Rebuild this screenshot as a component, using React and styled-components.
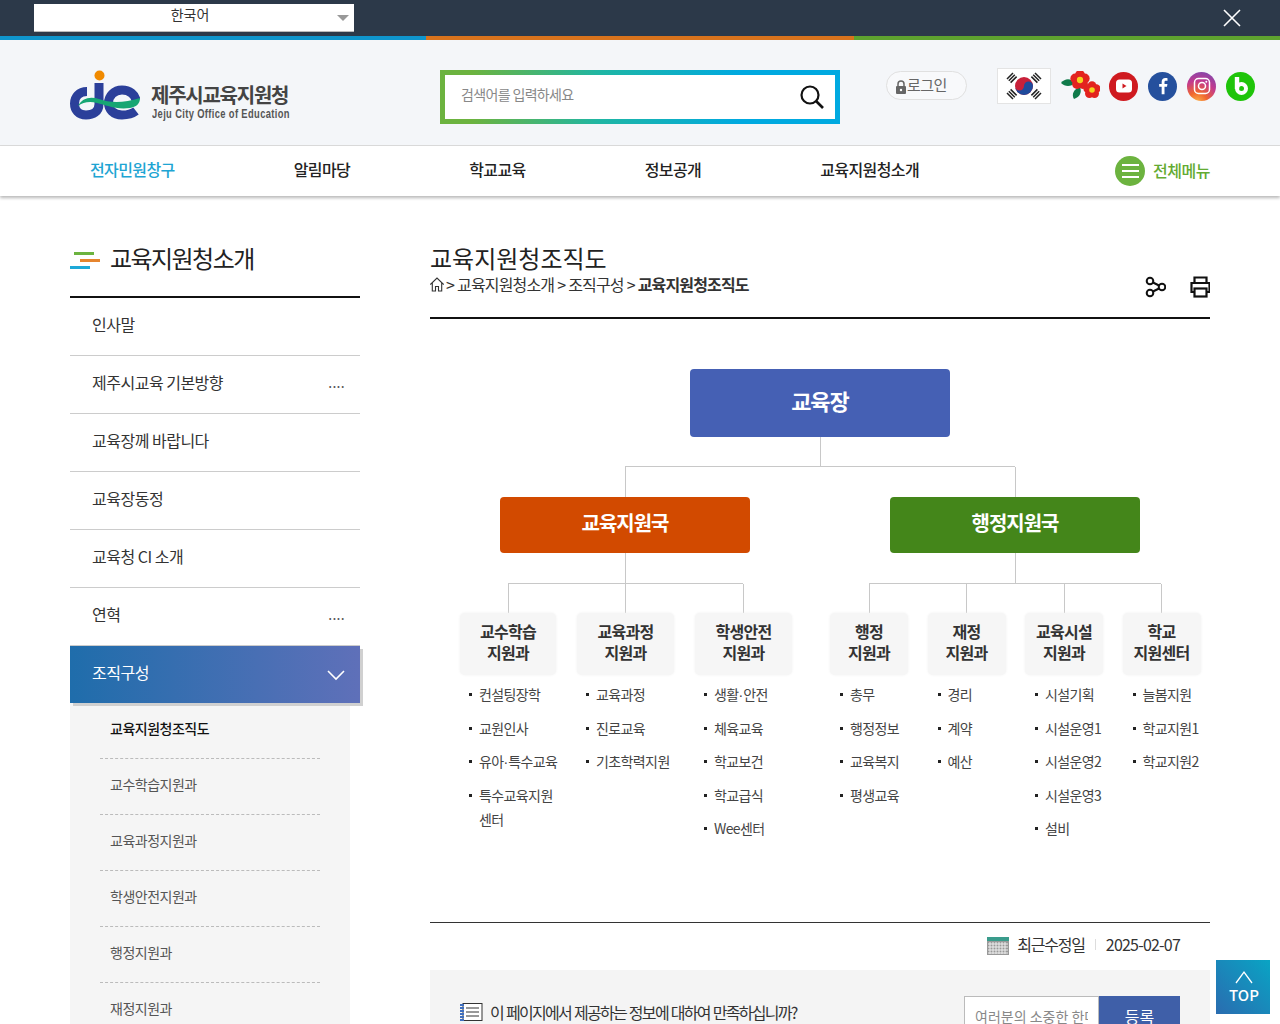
import React from 'react';
import styled, { createGlobalStyle } from 'styled-components';

const GlobalStyle = createGlobalStyle`
	html, body {
		margin: 0;
		padding: 0;
		overflow: hidden;
	}
	body {
		font-family: 'Noto Sans CJK KR', 'Noto Sans', sans-serif;
		color: #222;
		background: #fff;
	}
	ul {
		margin: 0;
		padding: 0;
		list-style: none;
	}
`;

const Page = styled.div`
	height: 1024px;
	overflow: hidden;
`;

const TopBar = styled.div`
	height: 36px;
	box-sizing: border-box;
	background: #2c3949;
	display: flex;
	align-items: flex-start;
	justify-content: space-between;
	padding: 4px 38px 0 34px;
`;

const LangSelect = styled.div`
	width: 320px;
	height: 28px;
	background: #fff;
	color: #333;
	font-size: 14px;
	line-height: 20px;
	text-align: center;
	position: relative;
	border-bottom: 1px solid #bbb;
	box-sizing: border-box;
	padding-right: 8px;
	&::after {
		content: '';
		position: absolute;
		right: 5px;
		top: 11px;
		border: 5px solid transparent;
		border-top: 6px solid #999;
		border-left-width: 6px;
		border-right-width: 6px;
	}
`;

const CloseBtn = styled.div`
	width: 20px;
	height: 20px;
	margin-top: 4px;
	svg {
		display: block;
	}
`;

const Stripe = styled.div`
	height: 4px;
	background: linear-gradient(
		to right,
		#0f95cc 0,
		#0f95cc 426px,
		#d9731c 426px,
		#d9731c 854px,
		#5ea32f 854px
	);
`;

const Header = styled.header`
	height: 106px;
	box-sizing: border-box;
	background: #f4f6f9;
	display: flex;
	align-items: flex-start;
	padding: 0 0 0 70px;
	border-bottom: 1px solid #dcdcdc;
`;

const Logo = styled.div`
	width: 370px;
	padding-top: 30px;
	display: flex;
	align-items: flex-start;
	flex-shrink: 0;
`;

const LogoText = styled.div`
	margin: 11px 0 0 11px;
	strong {
		display: block;
		font-size: 20px;
		line-height: 28px;
		font-weight: 700;
		color: #444;
		letter-spacing: -1.25px;
	}
	span {
		display: block;
		margin: -2px 0 0 1px;
		font-family: 'Liberation Sans', sans-serif;
		font-size: 13px;
		line-height: 14px;
		font-weight: 700;
		color: #555;
		letter-spacing: 0.5px;
		white-space: nowrap;
		transform: scaleX(0.72);
		transform-origin: left center;
	}
`;

const SearchBox = styled.div`
	width: 400px;
	height: 54px;
	margin-top: 30px;
	box-sizing: border-box;
	padding: 5px;
	flex-shrink: 0;
	background: linear-gradient(to right, #6cb33f 0, #6cb33f 8%, #1fb6a4 40%, #00a9e0 75%, #00a9e0 100%);
`;

const SearchInner = styled.div`
	height: 100%;
	box-sizing: border-box;
	background: #fff;
	display: flex;
	align-items: center;
	justify-content: space-between;
	padding: 0 10px 7px 16px;
	font-size: 14px;
	color: #888;
	letter-spacing: -0.65px;
	svg {
		display: block;
		margin-top: 7px;
	}
`;

const LoginPill = styled.div`
	width: 81px;
	height: 29px;
	margin: 31px 0 0 46px;
	box-sizing: border-box;
	border: 1px solid #e0e0e0;
	border-radius: 15px;
	background: #f8f9fb;
	display: flex;
	align-items: center;
	padding: 0 0 2px 8px;
	font-size: 15px;
	color: #666;
	letter-spacing: -0.5px;
	flex-shrink: 0;
	svg {
		display: block;
		margin-top: 4px;
	}
`;

const SnsRow = styled.div`
	display: flex;
	align-items: center;
	margin: 28px 0 0 30px;
	height: 36px;
	svg {
		display: block;
		flex-shrink: 0;
	}
`;

const FlagBox = styled.div`
	width: 54px;
	height: 36px;
	box-sizing: border-box;
	border: 1px solid #e4e4e4;
	background: #fff;
	margin-right: 10px;
`;

const SnsCircle = styled.div`
	width: 29px;
	height: 29px;
	border-radius: 50%;
	background: ${(p) => p.$bg};
	margin-left: ${(p) => p.$gap || 10}px;
	display: flex;
	align-items: center;
	justify-content: center;
	color: #fff;
`;

const Nav = styled.nav`
	height: 50px;
	box-sizing: border-box;
	background: #fff;
	display: flex;
	align-items: center;
	padding: 0 70px 0 90px;
	box-shadow: 0 2px 3px rgba(0, 0, 0, 0.28);
	position: relative;
`;

const NavLinks = styled.ul`
	display: flex;
	gap: 119px;
	flex: 1;
	margin-bottom: 4px;
`;

const NavLink = styled.li`
	font-size: 16px;
	font-weight: 500;
	letter-spacing: -0.6px;
	color: ${(p) => (p.$active ? '#1ea5d3' : '#222')};
`;

const AllMenu = styled.div`
	display: flex;
	align-items: center;
	gap: 8px;
	font-size: 16px;
	font-weight: 500;
	letter-spacing: -0.5px;
	color: #63ab32;
	span {
		margin-bottom: 3px;
	}
`;

const Burger = styled.div`
	width: 30px;
	height: 30px;
	border-radius: 50%;
	background: #6cb33f;
	display: flex;
	flex-direction: column;
	align-items: center;
	justify-content: center;
	gap: 4px;
	i {
		display: block;
		width: 17px;
		height: 2px;
		background: #fff;
	}
`;

const Main = styled.div`
	display: flex;
	padding: 46px 70px 0;
	gap: 70px;
`;

const Side = styled.aside`
	width: 290px;
	flex-shrink: 0;
`;

const SideTitle = styled.h2`
	margin: 0;
	height: 54px;
	border-bottom: 2px solid #111;
	display: flex;
	align-items: flex-start;
	gap: 10px;
	font-size: 24px;
	font-weight: 400;
	line-height: 32px;
	letter-spacing: -1.55px;
	color: #222;
	svg {
		display: block;
		margin-top: 10px;
	}
`;

const SideItem = styled.li`
	height: 58px;
	box-sizing: border-box;
	border-bottom: 1px solid #ccc;
	padding: 0 15px 6px 22px;
	display: flex;
	align-items: center;
	justify-content: space-between;
	font-size: 16px;
	letter-spacing: -0.5px;
	color: #333;
	small {
		font-size: 14px;
		letter-spacing: 0.3px;
		color: #555;
	}
`;

const SideActive = styled.li`
	height: 57px;
	box-sizing: border-box;
	padding: 0 15px 6px 22px;
	display: flex;
	align-items: center;
	justify-content: space-between;
	font-size: 16px;
	letter-spacing: -0.5px;
	color: #fff;
	background: linear-gradient(to right, #1f6dab, #5f70b9);
	box-shadow: 3px 3px 0 #d0d0d0;
	position: relative;
	svg {
		display: block;
		margin-top: 8px;
	}
`;

const SubMenu = styled.ul`
	width: 280px;
	background: #f5f5f5;
`;

const SubItem = styled.li`
	height: 56px;
	margin: 0 30px;
	box-sizing: border-box;
	border-bottom: 1px dashed #bbb;
	padding: 0 0 6px 10px;
	display: flex;
	align-items: center;
	font-size: 14px;
	letter-spacing: -0.5px;
	font-weight: ${(p) => (p.$current ? 500 : 400)};
	color: ${(p) => (p.$current ? '#111' : '#555')};
`;

const Content = styled.main`
	width: 780px;
	flex-shrink: 0;
`;

const ContentHead = styled.div`
	height: 75px;
	border-bottom: 2px solid #111;
	display: flex;
	justify-content: space-between;
`;

const PageTitle = styled.h1`
	margin: 0;
	font-size: 24px;
	font-weight: 400;
	line-height: 32px;
	color: #222;
`;

const Crumbs = styled.div`
	display: flex;
	align-items: center;
	gap: 3px;
	height: 20px;
	font-size: 16px;
	letter-spacing: -0.85px;
	color: #333;
	b {
		font-weight: 700;
	}
	svg {
		display: block;
		margin-right: -1px;
	}
`;

const Tools = styled.div`
	display: flex;
	gap: 23px;
	padding-top: 34px;
	svg {
		display: block;
	}
`;

const Chart = styled.div`
	display: flex;
	flex-direction: column;
	align-items: center;
	padding-top: 50px;
	height: 603px;
	box-sizing: border-box;
`;

const HeadBox = styled.div`
	width: ${(p) => p.$w}px;
	height: ${(p) => p.$h}px;
	flex-shrink: 0;
	background: ${(p) => p.$bg};
	border-radius: 4px;
	color: #fff;
	font-size: ${(p) => p.$size}px;
	font-weight: 700;
	letter-spacing: -1px;
	display: flex;
	align-items: center;
	justify-content: center;
	padding-bottom: 6px;
	box-sizing: border-box;
`;

const Stem = styled.div`
	width: 1px;
	height: ${(p) => p.$h}px;
	background: #c8c8c8;
	flex-shrink: 0;
`;

const Rail = styled.div`
	align-self: flex-start;
	margin-left: 195px;
	width: 390px;
	height: 1px;
	background: #c8c8c8;
`;

const Branches = styled.div`
	align-self: flex-start;
	margin-left: 30px;
	display: flex;
	gap: 40px;
`;

const Branch = styled.div`
	width: ${(p) => p.$w}px;
	display: flex;
	flex-direction: column;
	align-items: center;
`;

const SubRail = styled.div`
	align-self: flex-start;
	margin-left: ${(p) => p.$left}px;
	width: ${(p) => p.$w}px;
	height: 1px;
	background: #c8c8c8;
`;

const Columns = styled.div`
	align-self: stretch;
	display: flex;
	gap: ${(p) => p.$gap}px;
`;

const Column = styled.div`
	width: ${(p) => p.$w}px;
	flex-shrink: 0;
	display: flex;
	flex-direction: column;
	align-items: center;
`;

const DeptName = styled.div`
	width: 100%;
	height: 62px;
	background: #f6f6f6;
	border-radius: 5px;
	box-shadow: 0 0 3px #f0f0f0;
	text-align: center;
	font-size: 16px;
	font-weight: 700;
	line-height: 21px;
	letter-spacing: -0.7px;
	color: #333;
	padding-top: 8px;
	box-sizing: border-box;
`;

const Tasks = styled.ul`
	align-self: stretch;
	margin: 7px -4px 0 ${(p) => p.$indent || 0}px;
`;

const Task = styled.li`
	position: relative;
	padding-left: 19px;
	margin-bottom: 9.5px;
	font-size: 14px;
	line-height: 24px;
	letter-spacing: -0.6px;
	color: #444;
	&::before {
		content: '';
		position: absolute;
		left: 9px;
		top: 11px;
		width: 3px;
		height: 3px;
		background: #222;
	}
`;

const MidDot = styled.span`
	font-family: 'Liberation Sans', sans-serif;
	letter-spacing: 0;
	line-height: 0;
`;

const Modified = styled.div`
	border-top: 1px solid #333;
	height: 42px;
	display: flex;
	align-items: center;
	justify-content: flex-end;
	padding: 0 30px 5px 0;
	font-size: 16px;
	letter-spacing: -0.8px;
	color: #333;
	svg {
		display: block;
		margin: 4px 8px 0 0;
	}
	span {
		letter-spacing: -1.2px;
	}
	i {
		width: 1px;
		height: 11px;
		background: #ddd;
		margin: 0 10px;
	}
`;

const Survey = styled.div`
	background: #f4f4f4;
	height: 110px;
	display: flex;
	align-items: flex-start;
	justify-content: space-between;
	padding: 26px 30px 0;
`;

const SurveyText = styled.div`
	display: flex;
	align-items: center;
	gap: 7px;
	margin-top: 4px;
	font-size: 16px;
	letter-spacing: -1.7px;
	word-spacing: 1px;
	color: #333;
	svg {
		display: block;
	}
`;

const SurveyForm = styled.div`
	display: flex;
	height: 48px;
`;

const SurveyInput = styled.input`
	width: 135px;
	box-sizing: border-box;
	border: 1px solid #bbb;
	border-radius: 0;
	background: #fff;
	padding: 0 10px 8px;
	font-family: inherit;
	font-size: 14px;
	outline: none;
	&::placeholder {
		color: #888;
		opacity: 1;
	}
`;

const SurveyBtn = styled.div`
	width: 81px;
	background: #3f5fa8;
	color: #fff;
	font-size: 16px;
	text-align: center;
	padding-top: 8px;
	box-sizing: border-box;
`;

const TopBtn = styled.div`
	position: fixed;
	left: 1216px;
	top: 960px;
	width: 54px;
	height: 54px;
	background: linear-gradient(45deg, #2a6cb0, #09a4c4);
	color: #fff;
	display: flex;
	flex-direction: column;
	align-items: center;
	font-size: 15px;
	font-weight: 500;
	line-height: 18px;
	padding: 10px 0 0 2px;
	box-sizing: border-box;
	svg {
		display: block;
		margin-bottom: 2px;
	}
`;

const sideItems = [
	{ name: '인사말' },
	{ name: '제주시교육 기본방향', more: true },
	{ name: '교육장께 바랍니다' },
	{ name: '교육장동정' },
	{ name: '교육청 CI 소개' },
	{ name: '연혁', more: true },
];

const subItems = [
	'교육지원청조직도',
	'교수학습지원과',
	'교육과정지원과',
	'학생안전지원과',
	'행정지원과',
	'재정지원과',
];

const leftDepts = [
	{
		name: ['교수학습', '지원과'],
		w: 96,
		tasks: ['컨설팅장학', '교원인사', <>유아<MidDot>·</MidDot>특수교육</>, '특수교육지원 센터'],
	},
	{ name: ['교육과정', '지원과'], w: 97, tasks: ['교육과정', '진로교육', '기초학력지원'] },
	{
		name: ['학생안전', '지원과'],
		w: 97,
		tasks: [<>생활<MidDot>·</MidDot>안전</>, '체육교육', '학교보건', '학교급식', 'Wee센터'],
	},
];

const rightDepts = [
	{ name: ['행정', '지원과'], w: 78, tasks: ['총무', '행정정보', '교육복지', '평생교육'] },
	{ name: ['재정', '지원과'], w: 78, tasks: ['경리', '계약', '예산'] },
	{ name: ['교육시설', '지원과'], w: 78, tasks: ['시설기획', '시설운영1', '시설운영2', '시설운영3', '설비'] },
	{ name: ['학교', '지원센터'], w: 78, tasks: ['늘봄지원', '학교지원1', '학교지원2'] },
];

const JeLogo = () => (
	<svg width='70' height='50' viewBox='0 0 70 50'>
		<circle cx='29.5' cy='5.5' r='5' fill='#f08a00' />
		<path
			d='M29 13V34C29 42 23 45 16 45C8.500 45 4.500 40 4.500 33.500C4.500 27 9 21.500 17 21.500'
			fill='none'
			stroke='#2b3f9a'
			strokeWidth='9'
		/>
		<path
			d='M66 41C62 44 57 45 52 45C43 45 38.500 39 38.500 33C38.500 26 44 20 52 20C60 20 65 25 66 30'
			fill='none'
			stroke='#2b3f9a'
			strokeWidth='9'
		/>
		<path
			d='M8 36C12 28 20 26 29 29C40 33 54 33 70 28C70 34 66 37 60 38C46 40 36 35 27 33C20 31 13 32 8 36Z'
			fill='#17a673'
		/>
	</svg>
);

const Flag = () => (
	<svg width='52' height='34' viewBox='0 0 52 34'>
		<circle cx='26' cy='17' r='9' fill='#c8203a' />
		<path d='M17 17A4.500 4.500 0 0 0 26 17A4.500 4.500 0 0 1 35 17A9 9 0 0 1 17 17Z' fill='#1f4a9c' />
		<g stroke='#222' strokeWidth='1.500'>
			<path d='M9 10L15 4M10.800 11.800L16.800 5.800M12.600 13.600L18.600 7.600' />
			<path d='M37 4L43 10M35.200 5.800L41.200 11.800M33.400 7.600L39.400 13.600' />
			<path d='M9 24L15 30M10.800 22.200L16.800 28.200M12.600 20.400L18.600 26.400' />
			<path d='M43 24L37 30M41.200 22.200L35.200 28.200M39.400 20.400L33.400 26.400' />
		</g>
	</svg>
);

const Flower = ({ x, y, r }) => (
	<g>
		{[0, 72, 144, 216, 288].map((a) => (
			<circle
				key={a}
				cx={x + r * 0.55 * Math.cos((a * Math.PI) / 180 - 1.57)}
				cy={y + r * 0.55 * Math.sin((a * Math.PI) / 180 - 1.57)}
				r={r * 0.55}
				fill='#e3231f'
			/>
		))}
		<circle cx={x} cy={y} r={r * 0.35} fill='#f5d21e' />
	</g>
);

const Camellia = () => (
	<svg width='39' height='30' viewBox='0 0 39 30'>
		<path d='M0 12C4 7 10 7 14 12C10 16 4 16 0 12Z' fill='#0f7a4a' />
		<path d='M13 28C10 23 13 18 19 16C21 21 19 26 13 28Z' fill='#0f7a4a' />
		<Flower x={19} y={9} r={9} />
		<Flower x={31} y={19} r={8} />
	</svg>
);

const Org = ({ depts, gap, left, rail, indent }) => (
	<>
		<SubRail $left={left} $w={rail} />
		<Columns $gap={gap}>
			{depts.map((d) => (
				<Column key={d.name.join()} $w={d.w}>
					<Stem $h={29} />
					<DeptName>
						{d.name[0]}
						<br />
						{d.name[1]}
					</DeptName>
					<Tasks $indent={indent}>
						{d.tasks.map((t, i) => (
							<Task key={i}>{t}</Task>
						))}
					</Tasks>
				</Column>
			))}
		</Columns>
	</>
);

const App = () => {
	return (
		<Page>
			<GlobalStyle />
			<TopBar>
				<LangSelect>한국어</LangSelect>
				<CloseBtn>
					<svg width='20' height='20' viewBox='0 0 20 20'>
						<path d='M2 2L18 18M18 2L2 18' stroke='#fff' strokeWidth='1.600' />
					</svg>
				</CloseBtn>
			</TopBar>
			<Stripe />
			<Header>
				<Logo>
					<JeLogo />
					<LogoText>
						<strong>제주시교육지원청</strong>
						<span>Jeju City Office of Education</span>
					</LogoText>
				</Logo>
				<SearchBox>
					<SearchInner>
						검색어를 입력하세요
						<svg width='26' height='26' viewBox='0 0 26 26'>
							<circle cx='11' cy='11' r='8.500' fill='none' stroke='#111' strokeWidth='2.200' />
							<path d='M17 17L24 24' stroke='#111' strokeWidth='2.600' />
						</svg>
					</SearchInner>
				</SearchBox>
				<LoginPill>
					<svg width='12' height='14' viewBox='0 0 12 14'>
						<path d='M3 6V4A3 3 0 0 1 9 4V6' fill='none' stroke='#666' strokeWidth='1.500' />
						<rect x='1' y='6' width='10' height='8' rx='1' fill='#666' />
						<circle cx='6' cy='10' r='1.200' fill='#fff' />
					</svg>
					로그인
				</LoginPill>
				<SnsRow>
					<FlagBox>
						<Flag />
					</FlagBox>
					<Camellia />
					<SnsCircle $bg='#cf1a20' $gap={9}>
						<svg width='18' height='14' viewBox='0 0 18 14'>
							<rect x='1' y='0.500' width='16' height='13' rx='3.500' fill='#fff' />
							<path d='M7.500 4.500L11.500 7L7.500 9.500Z' fill='#cf1a20' />
						</svg>
					</SnsCircle>
					<SnsCircle $bg='#25509d'>
						<svg width='10' height='18' viewBox='0 0 12 20'>
							<path
								d='M7.800 20V11H10.800L11.300 7.500H7.800V5.400C7.800 4.400 8.100 3.700 9.600 3.700H11.400V0.600C11 0.500 10 0.400 8.800 0.400C6.200 0.400 4.400 2 4.400 5V7.500H1.400V11H4.400V20Z'
								fill='#fff'
							/>
						</svg>
					</SnsCircle>
					<SnsCircle $bg='radial-gradient(circle at 35% 105%, #fdb44a 0, #f0672e 28%, #c23a8f 60%, #6a4bb5 100%)'>
						<svg width='18' height='18' viewBox='0 0 18 18'>
							<rect x='1.500' y='1.500' width='15' height='15' rx='4' fill='none' stroke='#fff' strokeWidth='1.500' />
							<circle cx='9' cy='9' r='3.500' fill='none' stroke='#fff' strokeWidth='1.500' />
							<circle cx='13.300' cy='4.700' r='1' fill='#fff' />
						</svg>
					</SnsCircle>
					<SnsCircle $bg='#1fc40a'>
						<svg width='18' height='20' viewBox='0 0 18 20'>
							<path d='M5 1V13' fill='none' stroke='#fff' strokeWidth='4.400' />
							<circle cx='9.500' cy='12.500' r='4.500' fill='none' stroke='#fff' strokeWidth='4' />
						</svg>
					</SnsCircle>
				</SnsRow>
			</Header>
			<Nav>
				<NavLinks>
					<NavLink $active>전자민원창구</NavLink>
					<NavLink>알림마당</NavLink>
					<NavLink>학교교육</NavLink>
					<NavLink>정보공개</NavLink>
					<NavLink>교육지원청소개</NavLink>
				</NavLinks>
				<AllMenu>
					<Burger>
						<i />
						<i />
						<i />
					</Burger>
					<span>전체메뉴</span>
				</AllMenu>
			</Nav>
			<Main>
				<Side>
					<SideTitle>
						<svg width='30' height='18' viewBox='0 0 30 18'>
							<rect x='4' y='0' width='20' height='3' fill='#6cb33f' />
							<rect x='10' y='7' width='20' height='3' fill='#e6852f' />
							<rect x='0' y='14' width='20' height='3' fill='#1ea9d8' />
						</svg>
						교육지원청소개
					</SideTitle>
					<ul>
						{sideItems.map((item) => (
							<SideItem key={item.name}>
								{item.name}
								{item.more && <small>....</small>}
							</SideItem>
						))}
						<SideActive>
							조직구성
							<svg width='18' height='11' viewBox='0 0 18 11'>
								<path d='M1 1L9 9L17 1' fill='none' stroke='#fff' strokeWidth='1.600' />
							</svg>
						</SideActive>
					</ul>
					<SubMenu>
						{subItems.map((s, i) => (
							<SubItem key={s} $current={i === 0}>
								{s}
							</SubItem>
						))}
					</SubMenu>
				</Side>
				<Content>
					<ContentHead>
						<div>
							<PageTitle>교육지원청조직도</PageTitle>
							<Crumbs>
								<svg width='14' height='15' viewBox='0 0 14 15'>
									<path
										d='M0.300 7.500L7 1L13.700 7.500M2.300 6V14H5.500V9.500H8.500V14H11.700V6'
										fill='none'
										stroke='#333'
										strokeWidth='1.100'
									/>
								</svg>
								<span>&gt;</span>
								<span>교육지원청소개</span>
								<span>&gt;</span>
								<span>조직구성</span>
								<span>&gt;</span>
								<b>교육지원청조직도</b>
							</Crumbs>
						</div>
						<Tools>
							<svg width='22' height='22' viewBox='-1 0 22 22'>
								<g fill='none' stroke='#111' strokeWidth='2'>
									<circle cx='5' cy='5' r='3.300' />
									<circle cx='5' cy='17' r='3.300' />
									<circle cx='17' cy='11' r='3.300' />
									<path d='M8 6.500L14 9.500M8 15.500L14 12.500' />
								</g>
							</svg>
							<svg width='21' height='22' viewBox='-2 0 21 22'>
								<g fill='none' stroke='#111' strokeWidth='2.200'>
									<path d='M3.500 7V1.500H15.500V7' />
									<path d='M3.500 16H0.500V7H18.500V16H15.500' />
									<rect x='3.500' y='12.500' width='12' height='8' />
								</g>
							</svg>
						</Tools>
					</ContentHead>
					<Chart>
						<HeadBox $w={260} $h={68} $bg='#4560b4' $size={22}>
							교육장
						</HeadBox>
						<Stem $h={29} />
						<Rail />
						<Branches>
							<Branch $w={330}>
								<Stem $h={30} />
								<HeadBox $w={250} $h={56} $bg='#d24a00' $size={20}>
									교육지원국
								</HeadBox>
								<Stem $h={30} />
								<Org depts={leftDepts} gap={21} left={48} rail={235} />
							</Branch>
							<Branch $w={370}>
								<Stem $h={30} />
								<HeadBox $w={250} $h={56} $bg='#44861a' $size={20}>
									행정지원국
								</HeadBox>
								<Stem $h={30} />
								<Org depts={rightDepts} gap={19.500} left={39} rail={292} indent={1} />
							</Branch>
						</Branches>
					</Chart>
					<Modified>
						<svg width='22' height='18' viewBox='0 0 22 18'>
							<rect x='0' y='0' width='22' height='18' fill='#999' />
							<rect x='0' y='0' width='22' height='4' fill='#3a9c8c' />
							<path
								d='M1 7H21M1 10H21M1 13H21M1 16H21M3 5V17M6 5V17M9 5V17M12 5V17M15 5V17M18 5V17'
								stroke='#eee'
								strokeWidth='1'
							/>
						</svg>
						<span>최근수정일</span>
						<i />
						2025-02-07
					</Modified>
					<Survey>
						<SurveyText>
							<svg width='23' height='18' viewBox='0 0 23 18'>
								<rect x='3' y='0.500' width='19' height='17' fill='#fff' stroke='#333' />
								<path d='M6 5H19M6 9H19M6 13H19' stroke='#333' />
								<path d='M0 2H4M0 5H4M0 8H4M0 11H4M0 14H4M0 17H4' stroke='#3f6fc0' strokeWidth='2' />
							</svg>
							이 페이지에서 제공하는 정보에 대하여 만족하십니까?
						</SurveyText>
						<SurveyForm>
							<SurveyInput placeholder='여러분의 소중한 한마디' />
							<SurveyBtn>등록</SurveyBtn>
						</SurveyForm>
					</Survey>
				</Content>
			</Main>
			<TopBtn>
				<svg width='18' height='14' viewBox='0 0 18 14'>
					<path d='M1 13L9 2L17 13' fill='none' stroke='#fff' strokeWidth='1.300' />
				</svg>
				TOP
			</TopBtn>
		</Page>
	);
};

export default App;
